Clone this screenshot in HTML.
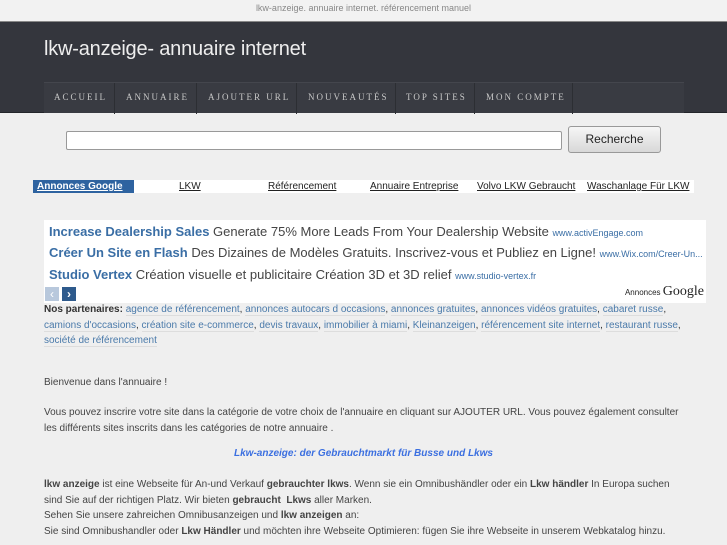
<!DOCTYPE html>
<html><head><meta charset="utf-8"><style>
*{margin:0;padding:0;box-sizing:border-box}
body{width:727px;height:545px;overflow:hidden;background:#efefef;font-family:"Liberation Sans",sans-serif;position:relative;color:#444}
.a{position:absolute;white-space:nowrap}
#top{top:0;left:0;width:727px;height:22px;background:#f2f2f2;border-bottom:1px solid #888;text-align:center;font-size:9px;color:#888;line-height:17px}
#hd{top:22px;left:0;width:727px;height:91px;background:#34363d;border-bottom:1px solid #23252a}
#title{left:44px;top:38px;font-size:20px;color:#eee;letter-spacing:-0.2px}
#nav{left:44px;top:82px;width:640px;height:31px;background:#393b42;border-top:1px solid #44464d;}
#nav span{position:absolute;top:0;height:31px;line-height:29px;font-family:"Liberation Serif",serif;font-size:9px;letter-spacing:2px;color:#c8c8c8;border-right:1px solid #2c2e33}
#inp{left:66px;top:131px;width:496px;height:19px;background:#fff;border:1px solid #999;border-radius:2px}
#btn{left:568px;top:126px;width:93px;height:27px;border:1px solid #999;border-radius:3px;background:linear-gradient(#f6f6f6,#d8d8d8);font-size:12px;color:#222;text-align:center;line-height:25px}
#bar{left:33px;top:180px;width:661px;height:13px;background:#fff;font-size:10px;line-height:13px}
#bar span{position:absolute;top:0;color:#222;text-decoration:underline}
#ads{left:44px;top:220px;width:662px;height:83px;background:#fff}
.ad{position:absolute;left:5px;font-size:13px;color:#444;white-space:nowrap}
.ad b{color:#3a6ea5}
.ad i{font-style:normal;font-size:9px;color:#3a6ea5}
#part{left:44px;top:302px;width:640px;font-size:10px;line-height:15.5px;white-space:normal;color:#333}
#part a{color:#4a7aaa;text-decoration:none;border-bottom:1px solid #ddd}
.t{left:44px;font-size:10px;color:#444}
</style></head><body>
<div class="a" id="top">lkw-anzeige. annuaire internet. référencement manuel</div>
<div class="a" id="hd"></div>
<div class="a" id="title">lkw-anzeige- annuaire internet</div>
<div class="a" id="nav">
<span style="left:0;width:71px;padding-left:10px">ACCUEIL</span>
<span style="left:71px;width:82px;padding-left:11px">ANNUAIRE</span>
<span style="left:153px;width:100px;padding-left:11px">AJOUTER URL</span>
<span style="left:253px;width:99px;padding-left:11px">NOUVEAUTÉS</span>
<span style="left:352px;width:79px;padding-left:10px">TOP SITES</span>
<span style="left:431px;width:98px;padding-left:11px">MON COMPTE</span>
</div>
<div class="a" id="inp"></div>
<div class="a" id="btn">Recherche</div>
<div class="a" id="bar">
<span style="left:0;width:101px;height:13px;background:#2e63a0;color:#fff;font-weight:bold;padding-left:4px">Annonces Google</span>
<span style="left:146px">LKW</span>
<span style="left:235px">Référencement</span>
<span style="left:337px">Annuaire Entreprise</span>
<span style="left:444px">Volvo LKW Gebraucht</span>
<span style="left:554px">Waschanlage Für LKW</span>
</div>
<div class="a" id="ads">
<div class="ad" style="top:4px"><b>Increase Dealership Sales</b> Generate 75% More Leads From Your Dealership Website <i>www.activEngage.com</i></div>
<div class="ad" style="top:25px"><b>Créer Un Site en Flash</b> Des Dizaines de Modèles Gratuits. Inscrivez-vous et Publiez en Ligne! <i>www.Wix.com/Creer-Un...</i></div>
<div class="ad" style="top:47px"><b>Studio Vertex</b> Création visuelle et publicitaire Création 3D et 3D relief <i>www.studio-vertex.fr</i></div>
<div style="position:absolute;left:1px;top:67px;width:14px;height:14px;background:#b8c8dc;color:#fff;font-size:12px;text-align:center;line-height:14px">‹</div>
<div style="position:absolute;left:18px;top:67px;width:14px;height:14px;background:#2e5a8c;color:#fff;font-size:12px;font-weight:bold;text-align:center;line-height:14px">›</div>
<div style="position:absolute;right:2px;top:64px;font-size:8px;color:#222;white-space:nowrap">Annonces <span style="font-family:'Liberation Serif',serif;font-size:14px">Google</span></div>
</div>
<div class="a" id="part"><b>Nos partenaires:</b> <a>agence de référencement</a>, <a>annonces autocars d occasions</a>, <a>annonces gratuites</a>, <a>annonces vidéos gratuites</a>, <a>cabaret russe</a>, <a>camions d'occasions</a>, <a>création site e-commerce</a>, <a>devis travaux</a>, <a>immobilier à miami</a>, <a>Kleinanzeigen</a>, <a>référencement site internet</a>, <a>restaurant russe</a>, <a>société de référencement</a></div>
<div class="a t" style="top:377px">Bienvenue dans l'annuaire !</div>
<div class="a t" style="top:407px">Vous pouvez inscrire votre site dans la catégorie de votre choix de l'annuaire en cliquant sur AJOUTER URL. Vous pouvez également consulter</div>
<div class="a t" style="top:423px">les différents sites inscrits dans les catégories de notre annuaire .</div>
<div class="a" style="top:448px;left:0;width:727px;text-align:center;font-size:10px;font-weight:bold;font-style:italic;color:#3b6fe0">Lkw-anzeige: der Gebrauchtmarkt für Busse und Lkws</div>
<div class="a t" style="top:479px"><b>lkw anzeige</b> ist eine Webseite für An-und Verkauf <b>gebrauchter lkws</b>. Wenn sie ein Omnibushändler oder ein <b>Lkw händler</b> In Europa suchen</div>
<div class="a t" style="top:495px">sind Sie auf der richtigen Platz. Wir bieten <b>gebraucht&nbsp; Lkws</b> aller Marken.</div>
<div class="a t" style="top:510px">Sehen Sie unsere zahreichen Omnibusanzeigen und <b>lkw anzeigen</b> an:</div>
<div class="a t" style="top:526px">Sie sind Omnibushandler oder <b>Lkw Händler</b> und möchten ihre Webseite Optimieren: fügen Sie ihre Webseite in unserem Webkatalog hinzu.</div>
</body></html>
